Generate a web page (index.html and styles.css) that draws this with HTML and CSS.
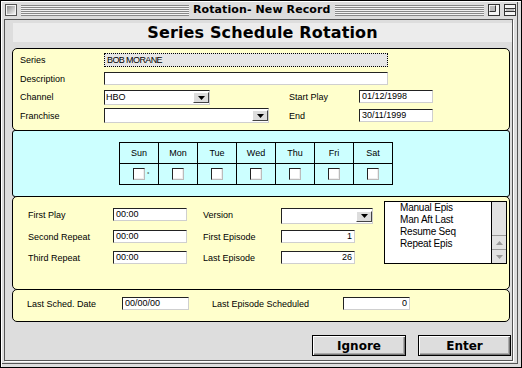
FILE: index.html
```html
<!DOCTYPE html>
<html lang="en">
<head>
    <meta charset="UTF-8">
    <title>Rotation- New Record</title>
    <link rel="stylesheet" href="styles.css">
</head>
<body>

<div class="window">
    <div class="titlebar">
        <svg class="tb-box" width="12" height="12" viewBox="0 0 12 12">
            <defs>
                <linearGradient id="cb" x1="0" y1="0" x2="1" y2="1">
                    <stop offset="0" stop-color="#8c8c8c"/>
                    <stop offset="1" stop-color="#f4f4f4"/>
                </linearGradient>
            </defs>
            <rect x="0.5" y="0.5" width="11" height="11" fill="#f4f4f4" stroke="#555"/>
            <rect x="2" y="2" width="8" height="8" fill="url(#cb)"/>
        </svg>
        <div class="stripes stripes-left"></div>
        <div class="title">Rotation- New Record</div>
        <div class="stripes stripes-right"></div>
        <svg class="tb-box" width="12" height="12" viewBox="0 0 12 12">
            <rect x="0.5" y="0.5" width="11" height="11" fill="#f4f4f4" stroke="#333"/>
            <path d="M1.5 7.5 H7.5 V1.5" fill="none" stroke="#333"/>
            <rect x="2" y="2" width="5" height="5" fill="#bbb"/>
        </svg>
        <svg class="tb-box" width="12" height="12" viewBox="0 0 12 12">
            <rect x="0.5" y="0.5" width="11" height="11" fill="#f4f4f4" stroke="#333"/>
            <path d="M1 4.5 H11 M1 7.5 H11" stroke="#333"/>
            <rect x="2" y="5" width="8" height="2" fill="#bbb"/>
        </svg>
    </div>

    <div class="content">
        <div class="header-band">Series Schedule Rotation</div>

        <div class="panel yellow series-panel">
            <div class="label">Series</div>
            <div class="field dotted long">BOB MORANE</div>

            <div class="label">Description</div>
            <div class="field long"></div>

            <div class="label">Channel</div>
            <div class="popup channel">
                <span class="popup-text">HBO</span>
                <span class="popup-btn"><svg width="7" height="4" viewBox="0 0 7 4"><polygon points="0,0 7,0 3.5,4" fill="#000"/></svg></span>
            </div>
            <div class="label">Start Play</div>
            <div class="field date">01/12/1998</div>

            <div class="label">Franchise</div>
            <div class="popup franchise">
                <span class="popup-text"></span>
                <span class="popup-btn"><svg width="7" height="4" viewBox="0 0 7 4"><polygon points="0,0 7,0 3.5,4" fill="#000"/></svg></span>
            </div>
            <div class="label">End</div>
            <div class="field date">30/11/1999</div>
        </div>

        <div class="panel cyan days-panel">
            <div class="days">
                <div class="day-head">Sun</div>
                <div class="day-head">Mon</div>
                <div class="day-head">Tue</div>
                <div class="day-head">Wed</div>
                <div class="day-head">Thu</div>
                <div class="day-head">Fri</div>
                <div class="day-head">Sat</div>
                <div class="day-cell"><span class="check"></span><span class="mark">°</span></div>
                <div class="day-cell"><span class="check"></span></div>
                <div class="day-cell"><span class="check"></span></div>
                <div class="day-cell"><span class="check"></span></div>
                <div class="day-cell"><span class="check"></span></div>
                <div class="day-cell"><span class="check"></span></div>
                <div class="day-cell"><span class="check"></span></div>
            </div>
        </div>

        <div class="panel yellow times-panel">
            <div class="times-grid">
                <div class="label">First Play</div>
                <div class="field time">00:00</div>
                <div class="label">Version</div>
                <div class="popup version">
                    <span class="popup-text"></span>
                    <span class="popup-btn"><svg width="7" height="4" viewBox="0 0 7 4"><polygon points="0,0 7,0 3.5,4" fill="#000"/></svg></span>
                </div>

                <div class="label">Second Repeat</div>
                <div class="field time">00:00</div>
                <div class="label">First Episode</div>
                <div class="field number">1</div>

                <div class="label">Third Repeat</div>
                <div class="field time">00:00</div>
                <div class="label">Last Episode</div>
                <div class="field number">26</div>
            </div>

            <div class="listbox">
                <div class="list-items">
                    <div>Manual Epis</div>
                    <div>Man Aft Last</div>
                    <div>Resume Seq</div>
                    <div>Repeat Epis</div>
                </div>
                <div class="scrollbar">
                    <div class="scroll-track"></div>
                    <div class="scroll-arrow"><svg width="7" height="4" viewBox="0 0 7 4"><polygon points="0,4 7,4 3.5,0" fill="#999"/></svg></div>
                    <div class="scroll-arrow"><svg width="7" height="4" viewBox="0 0 7 4"><polygon points="0,0 7,0 3.5,4" fill="#999"/></svg></div>
                </div>
            </div>
        </div>

        <div class="panel yellow last-panel">
            <div class="label last-date-label">Last Sched. Date</div>
            <div class="field short">00/00/00</div>
            <div class="label last-ep-label">Last Episode Scheduled</div>
            <div class="field short number">0</div>
        </div>

        <div class="buttons">
            <button class="mac-button ignore">Ignore</button>
            <button class="mac-button enter">Enter</button>
        </div>
    </div>
</div>

</body>
</html>
```

FILE: styles.css
```css
* {
    box-sizing: border-box;
}

body {
    margin: 0;
    font-family: "Liberation Sans", Arial, sans-serif;
    font-size: 9px;
    color: #000;
    background: #fff;
}

/* window frame */

.window {
    width: 522px;
    height: 368px;
    border: 1px solid #000;
    background-color: #dddddd;
    box-shadow: inset 1px 1px 0 #fff, inset -3px -3px 0 #ddd, inset -4px -4px 0 #555;
}

.titlebar {
    display: flex;
    align-items: center;
    height: 18px;
    padding-left: 4px;
}

.tb-box {
    display: block;
    flex-shrink: 0;
}

.stripes {
    height: 11px;
    background: repeating-linear-gradient(to bottom, #888 0, #888 1px, #f2f2f2 1px, #f2f2f2 2px);
}

.stripes-left {
    width: 168px;
    margin-left: 4px;
}

.stripes-right {
    flex-grow: 1;
    margin-right: 4px;
}

.titlebar .tb-box:last-child {
    margin-left: 4px;
    margin-right: 5px;
}

.title {
    padding: 0 4px;
    font-family: "DejaVu Sans", sans-serif;
    font-weight: bold;
    font-size: 11px;
    line-height: 18px;
    letter-spacing: 0.1px;
}

.content {
    width: 509px;
    height: 342px;
    margin-left: 3px;
    border: 1px solid #555;
    box-shadow: 1px 1px 0 #fff;
    background-color: #dddddd;
}

.header-band {
    height: 19px;
    margin: 3px 0 0 8px;
    background-color: #ececec;
    text-align: center;
    font-family: "DejaVu Sans", sans-serif;
    font-weight: bold;
    font-size: 16px;
    line-height: 19px;
    letter-spacing: 0.15px;
}

/* panels */

.panel {
    width: 498px;
    margin-left: 7px;
    border: 1px solid #000;
    border-radius: 5px;
}

.yellow {
    background-color: #ffffcc;
}

.cyan {
    background-color: #ccffff;
}

.series-panel {
    height: 83px;
    margin-top: 6px;
    padding: 4px 0 0 7px;
    display: grid;
    grid-template-columns: 84px 185px 70px 74px;
    grid-template-rows: 19px 18px 19px 19px;
    align-items: start;
}

.series-panel .long {
    grid-column: 2 / span 3;
    width: 284px;
}

.label {
    line-height: 13px;
    padding-top: 1px;
    white-space: nowrap;
}

/* fields */

.field {
    height: 13px;
    padding: 0 2px;
    border: 1px solid;
    border-color: #222 #cfcfcf #cfcfcf #222;
    background-color: #fff;
    line-height: 11px;
    white-space: nowrap;
    overflow: hidden;
}

.field.dotted {
    height: 14px;
    border: 1px dotted #000;
    background-color: #e6e6e6;
    line-height: 12px;
    letter-spacing: -0.6px;
}

.field.date {
    width: 74px;
}

.field.time {
    width: 74px;
}

.field.number {
    text-align: right;
}

.times-grid .field.number {
    width: 74px;
}

.field.short {
    width: 67px;
}

.popup {
    display: flex;
    align-items: center;
    border: 1px solid;
    border-color: #222 #cfcfcf #cfcfcf #222;
    background-color: #fff;
}

.popup-text {
    flex-grow: 1;
    padding-left: 1px;
    line-height: 11px;
}

.popup-btn {
    display: flex;
    justify-content: center;
    align-items: center;
    width: 16px;
    height: 11px;
    margin-right: 0;
    border: 1px solid;
    border-color: #fff #444 #444 #fff;
    background-color: #dddddd;
}

.popup-btn svg {
    display: block;
}

.channel {
    width: 106px;
    height: 15px;
}

.franchise {
    width: 165px;
    height: 15px;
    margin-top: -1px;
}

.version {
    width: 92px;
    height: 16px;
}

/* days */

.days-panel {
    height: 67px;
    margin-top: -1px;
    border-radius: 3px;
    padding: 11px 0 0 106px;
}

.days {
    display: grid;
    grid-template-columns: repeat(7, 39px);
    grid-template-rows: 21px 21px;
    width: 274px;
    border-top: 1px solid #000;
    border-left: 1px solid #000;
}

.day-head,
.day-cell {
    display: flex;
    justify-content: center;
    align-items: center;
    border-right: 1px solid #000;
    border-bottom: 1px solid #000;
}

.day-head {
    padding-bottom: 1px;
}

.check {
    width: 12px;
    height: 12px;
    border: 1px solid;
    border-color: #222 #bbb #bbb #222;
    background-color: #fff;
    box-shadow: inset -1px -1px 0 #eee;
}

.mark {
    width: 4px;
    margin: 0 -6px 0 2px;
    font-size: 6px;
    line-height: 6px;
}

/* times */

.times-panel {
    height: 94px;
    margin-top: -1px;
    padding: 4px 0 0 15px;
    display: flex;
    align-items: flex-start;
}

.times-grid {
    display: grid;
    grid-template-columns: 85px 90px 78px 92px;
    grid-template-rows: 22px 21px 21px;
    align-items: start;
    margin-top: 7px;
}

.listbox {
    display: flex;
    width: 123px;
    height: 63px;
    margin-left: 11px;
    border: 1px solid #000;
    background-color: #fff;
}

.list-items {
    flex-grow: 1;
    padding-left: 15px;
    font-size: 10px;
    line-height: 12px;
    letter-spacing: -0.2px;
}

.scrollbar {
    display: flex;
    flex-direction: column;
    width: 15px;
    border-left: 1px solid #000;
    background-color: #e2e2e2;
}

.scroll-track {
    flex-grow: 1;
}

.scroll-arrow {
    display: flex;
    justify-content: center;
    align-items: center;
    height: 14px;
    border-top: 1px solid #999;
}

.scroll-arrow svg {
    display: block;
}

/* last row */

.last-panel {
    height: 33px;
    margin-top: -1px;
    padding: 7px 0 0 14px;
    display: flex;
    align-items: flex-start;
}

.last-date-label {
    width: 95px;
}

.last-ep-label {
    width: 131px;
    margin-left: 23px;
}

/* buttons */

.buttons {
    display: flex;
    justify-content: flex-end;
    gap: 12px;
    margin-top: 13px;
    padding-right: 1px;
}

.mac-button {
    height: 21px;
    padding: 0;
    border: 1px solid #000;
    background-color: #dddddd;
    box-shadow: inset 1px 1px 0 #fff, inset -1px -1px 0 #777, inset -2px -2px 0 #aaa;
    font-family: "DejaVu Sans", sans-serif;
    font-weight: bold;
    font-size: 12px;
    color: #000;
}

.ignore {
    width: 94px;
}

.enter {
    width: 93px;
}
```
